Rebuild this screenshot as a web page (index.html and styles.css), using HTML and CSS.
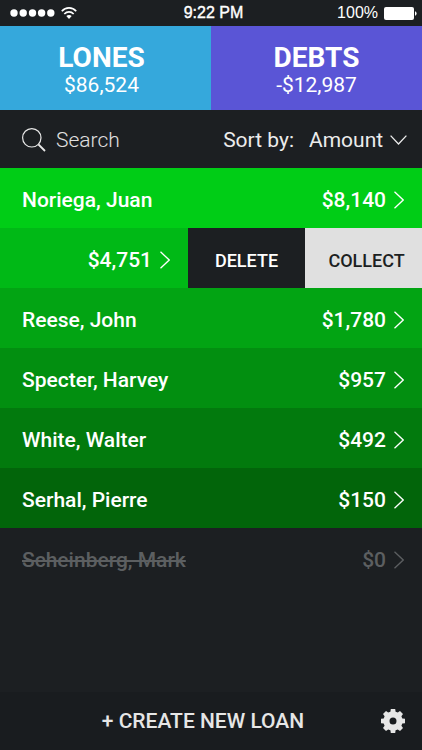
FILE: index.html
```html
<!DOCTYPE html>
<html lang="en">
<head>
<meta charset="utf-8">
<meta name="viewport" content="width=device-width, initial-scale=1">
<title>Lones</title>
<link rel="stylesheet" href="styles.css">
</head>
<body>
<svg class="defs" aria-hidden="true">
  <symbol id="chevron" viewBox="0 0 10 18"><path d="M0.5 0.8 9.2 9 0.5 17.2"/></symbol>
</svg>
<div class="app">
  <header class="status">
    <div class="status-left">
      <svg width="45" height="8" viewBox="0 0 45 8" fill="#fff" aria-hidden="true"><circle cx="4" cy="4" r="3.7"/><circle cx="13.2" cy="4" r="3.7"/><circle cx="22.5" cy="4" r="3.7"/><circle cx="31.6" cy="4" r="3.7"/><circle cx="40.8" cy="4" r="3.7"/></svg>
      <svg width="16" height="12" viewBox="0 0 16 12" fill="none" stroke="#fff" stroke-width="1.7" aria-hidden="true"><path d="M0.8 4.2C4.7-.2 11.3-.2 15.2 4.2M3.3 7C6 4.2 10 4.2 12.7 7"/><path d="M5.3 9.1C6.8 7.6 9.2 7.6 10.7 9.1L8 12Z" fill="#fff" stroke="none"/></svg>
    </div>
    <time class="clock">9:22 PM</time>
    <div class="status-right">
      <span>100%</span>
      <svg width="33" height="13" viewBox="0 0 33 13" fill="#fff" aria-hidden="true"><rect width="30" height="13" rx="2"/><path d="M31 4.2Q32.6 4.6 32.6 6.5T31 8.8Z"/></svg>
    </div>
  </header>
  <nav class="tabs">
    <a class="tab tab-lones" href="#lones"><span class="tab-title">LONES</span><span class="tab-total">$86,524</span></a>
    <a class="tab tab-debts" href="#debts"><span class="tab-title">DEBTS</span><span class="tab-total">-$12,987</span></a>
  </nav>
  <div class="tools">
    <label class="search">
      <svg width="24" height="24" viewBox="0 0 24 24" fill="none" stroke="#e8e8e8" aria-hidden="true"><circle cx="9.8" cy="9.8" r="9.2" stroke-width="1.2"/><path d="M16.5 16.5 23 23" stroke-width="1.8"/></svg>
      <input type="search" placeholder="Search" aria-label="Search">
    </label>
    <div class="sort">
      <label for="sort">Sort by:</label>
      <select id="sort"><option>Amount</option></select>
      <svg class="down" width="17" height="10" viewBox="0 0 17 10" aria-hidden="true"><path d="M0.6 0.6 8.5 9 16.4 0.6"/></svg>
    </div>
  </div>
  <main class="list">
    <a class="row shade-1" href="#noriega"><span>Noriega, Juan</span><span class="amount">$8,140</span><svg class="chevron"><use href="#chevron"/></svg></a>
    <div class="swiped">
      <a class="row shade-2" href="#open"><span class="amount">$4,751</span><svg class="chevron"><use href="#chevron"/></svg></a>
      <button class="action delete" type="button">DELETE</button>
      <button class="action collect" type="button">COLLECT</button>
    </div>
    <a class="row shade-3" href="#reese"><span>Reese, John</span><span class="amount">$1,780</span><svg class="chevron"><use href="#chevron"/></svg></a>
    <a class="row shade-4" href="#specter"><span>Specter, Harvey</span><span class="amount">$957</span><svg class="chevron"><use href="#chevron"/></svg></a>
    <a class="row shade-5" href="#white"><span>White, Walter</span><span class="amount">$492</span><svg class="chevron"><use href="#chevron"/></svg></a>
    <a class="row shade-6" href="#serhal"><span>Serhal, Pierre</span><span class="amount">$150</span><svg class="chevron"><use href="#chevron"/></svg></a>
    <a class="row settled" href="#scheinberg"><s>Scheinberg, Mark</s><span class="amount">$0</span><svg class="chevron"><use href="#chevron"/></svg></a>
  </main>
  <footer class="bar">
    <button class="create" type="button">+ CREATE NEW LOAN</button>
    <button class="settings" type="button" aria-label="Settings">
      <svg width="24" height="24" viewBox="-12 -12 24 24" fill="#e6e6e6" aria-hidden="true"><path fill-rule="evenodd" d="M-2.2-12H2.2L2.6-9.3 4.8-8.4 7-10 10-7 8.4-4.8 9.3-2.6 12-2.2V2.2L9.3 2.6 8.4 4.8 10 7 7 10 4.8 8.4 2.6 9.3 2.2 12H-2.2L-2.6 9.3-4.8 8.4-7 10-10 7-8.4 4.8-9.3 2.6-12 2.2V-2.2L-9.3-2.6-8.4-4.8-10-7-7-10-4.8-8.4-2.6-9.3ZM0-3.5A3.5 3.5 0 1 0 0 3.5 3.5 3.5 0 1 0 0-3.5Z"/></svg>
    </button>
  </footer>
</div>
</body>
</html>
```
FILE: styles.css
```css
* {
  box-sizing: border-box;
}

body {
  margin: 0;
  background: #1c1f22;
  color: #fff;
  font-family: Roboto, sans-serif;
  font-size: 21px;
  line-height: 26px;
}

a {
  color: inherit;
  text-decoration: none;
}

button,
input,
select {
  margin: 0;
  padding: 0;
  border: 0;
  background: none;
  color: inherit;
  font: inherit;
}

svg {
  display: block;
  flex: none;
}

.defs {
  position: absolute;
  width: 0;
  height: 0;
}

.app {
  display: flex;
  flex-direction: column;
  min-height: 100vh;
}

.status {
  display: grid;
  grid-template-columns: 1fr auto 1fr;
  align-items: center;
  height: 26px;
  padding: 0 5px 0 10px;
  font-family: "Liberation Sans", sans-serif;
  font-size: 16px;
}

.status-left,
.status-right {
  display: flex;
  align-items: center;
  gap: 6px;
}

.status-right {
  justify-content: flex-end;
}

.clock {
  -webkit-text-stroke: 0.4px #fff;
}

.tabs {
  display: grid;
  grid-template-columns: 1fr 1fr;
  height: 84px;
}

.tab {
  display: flex;
  flex-direction: column;
  align-items: center;
  padding-top: 18px;
}

.tab-lones {
  padding-right: 8px;
  background: #35a8dc;
}

.tab-debts {
  background: #5a55d6;
}

.tab-title {
  font-size: 28px;
  font-weight: 700;
  line-height: 28px;
}

.tools {
  display: flex;
  align-items: center;
  justify-content: space-between;
  height: 58px;
  padding: 2px 15px 0 22px;
  color: #ececec;
}

.search {
  display: flex;
  flex: 1;
  align-items: center;
  gap: 10px;
  min-width: 0;
}

.search input {
  flex: 1;
  min-width: 0;
  outline: 0;
  font-weight: 300;
}

.search input::placeholder {
  color: #e0e0e0;
  opacity: 1;
}

.sort {
  display: flex;
  align-items: center;
}

.sort select {
  margin: 0 6px 0 15px;
  appearance: none;
}

.down,
.chevron {
  fill: none;
  stroke: currentColor;
  stroke-width: 1.3;
}

.row {
  display: flex;
  align-items: center;
  height: 60px;
  padding: 4px 18px 0 22px;
  font-weight: 500;
}

.amount {
  margin-left: auto;
}

.chevron {
  width: 10px;
  height: 18px;
  margin-left: 8px;
}

.shade-1 { background: #00cd16; }
.shade-2 { background: #00b916; }
.shade-3 { background: #02a413; }
.shade-4 { background: #028f10; }
.shade-5 { background: #027a0d; }
.shade-6 { background: #02650a; }

.settled {
  color: #5c5f61;
}

.swiped {
  display: flex;
}

.swiped .row {
  flex: 1;
}

.action {
  width: 117px;
  padding-top: 6px;
  font-size: 18px;
  font-weight: 500;
}

.collect {
  padding-left: 6px;
  background: #e0e0e0;
  color: #1c1f22;
}

.bar {
  display: grid;
  grid-template-columns: 1fr auto 1fr;
  align-items: center;
  height: 58px;
  margin-top: auto;
  padding: 0 17px;
  background: #191c1f;
  color: #e6e6e6;
}

.create {
  grid-column: 2;
  padding-right: 16px;
  font-weight: 500;
}

.settings {
  justify-self: end;
}
```
